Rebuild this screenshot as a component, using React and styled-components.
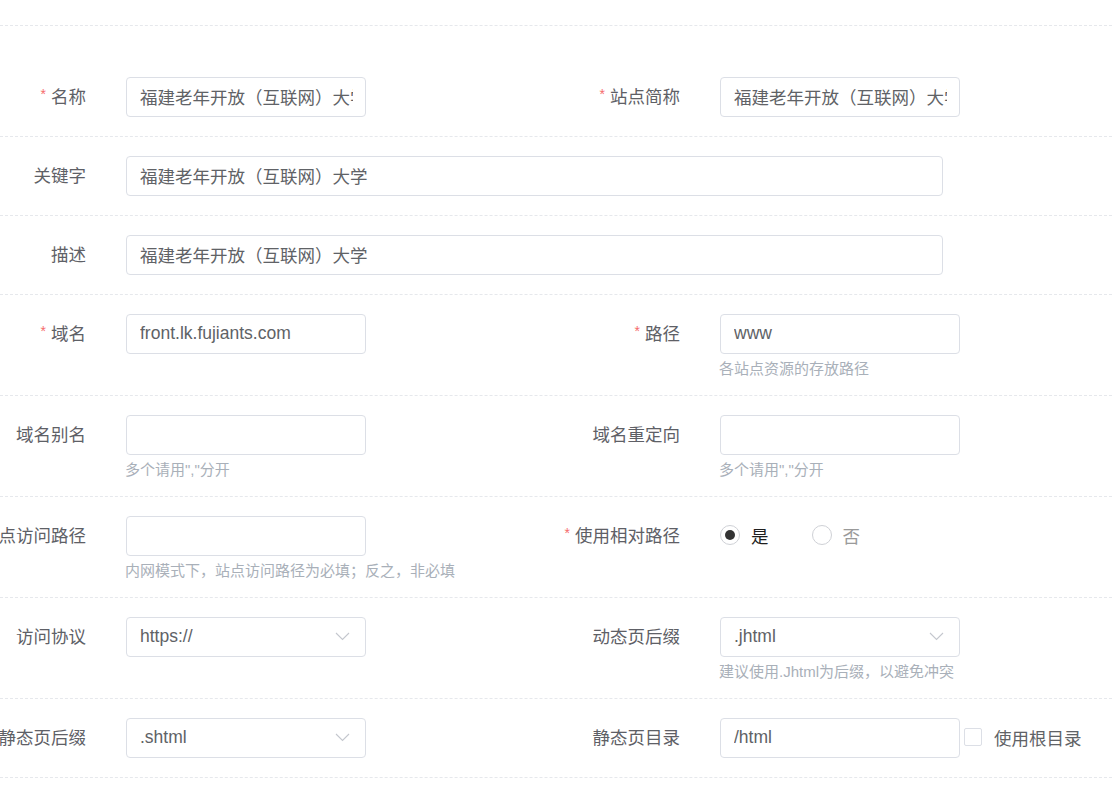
import React from 'react';
import styled, { createGlobalStyle } from 'styled-components';

const GlobalStyle = createGlobalStyle`
  html, body {
    margin: 0;
    padding: 0;
    background: #fff;
    overflow: hidden;
  }
  body {
    font-family: "Liberation Sans", "Noto Sans CJK SC", sans-serif;
    color: #606266;
  }
`;

const font = `"Liberation Sans", "Noto Sans CJK SC", sans-serif`;

const ChevronDown = () => (
  <svg width="15" height="9" viewBox="0 0 15 9" fill="none">
    <path d="M1 1l6.5 6.5L14 1" stroke="#c4c7ce" strokeWidth="1.1" />
  </svg>
);

const SiteForm = function () {
  return (
    <Page>
      <GlobalStyle />
      <TopBar />
      <Form>
        <Row>
          <Field>
            <Label required>名称</Label>
            <Control>
              <Input readOnly defaultValue="福建老年开放（互联网）大学" />
            </Control>
          </Field>
          <Field>
            <Label required>站点简称</Label>
            <Control>
              <Input readOnly defaultValue="福建老年开放（互联网）大学" />
            </Control>
          </Field>
        </Row>

        <Row>
          <Field>
            <Label>关键字</Label>
            <Control wide>
              <Input readOnly defaultValue="福建老年开放（互联网）大学" />
            </Control>
          </Field>
        </Row>

        <Row>
          <Field>
            <Label>描述</Label>
            <Control wide>
              <Input readOnly defaultValue="福建老年开放（互联网）大学" />
            </Control>
          </Field>
        </Row>

        <Row>
          <Field>
            <Label required>域名</Label>
            <Control>
              <Input readOnly defaultValue="front.lk.fujiants.com" />
            </Control>
          </Field>
          <Field>
            <Label required>路径</Label>
            <Control>
              <Input readOnly defaultValue="www" />
              <Hint>各站点资源的存放路径</Hint>
            </Control>
          </Field>
        </Row>

        <Row>
          <Field>
            <Label>域名别名</Label>
            <Control>
              <Input readOnly defaultValue="" />
              <Hint>多个请用","分开</Hint>
            </Control>
          </Field>
          <Field>
            <Label>域名重定向</Label>
            <Control>
              <Input readOnly defaultValue="" />
              <Hint>多个请用","分开</Hint>
            </Control>
          </Field>
        </Row>

        <Row>
          <Field>
            <Label>站点访问路径</Label>
            <Control>
              <Input readOnly defaultValue="" />
              <Hint>内网模式下，站点访问路径为必填；反之，非必填</Hint>
            </Control>
          </Field>
          <Field>
            <Label required>使用相对路径</Label>
            <RadioGroup>
              <RadioItem checked>
                <RadioCircle checked />
                是
              </RadioItem>
              <RadioItem>
                <RadioCircle />
                否
              </RadioItem>
            </RadioGroup>
          </Field>
        </Row>

        <Row>
          <Field>
            <Label>访问协议</Label>
            <Control>
              <Select>
                <span>https://</span>
                <ChevronDown />
              </Select>
            </Control>
          </Field>
          <Field>
            <Label>动态页后缀</Label>
            <Control>
              <Select>
                <span>.jhtml</span>
                <ChevronDown />
              </Select>
              <Hint>建议使用.Jhtml为后缀，以避免冲突</Hint>
            </Control>
          </Field>
        </Row>

        <Row>
          <Field>
            <Label>静态页后缀</Label>
            <Control>
              <Select>
                <span>.shtml</span>
                <ChevronDown />
              </Select>
            </Control>
          </Field>
          <Field>
            <Label>静态页目录</Label>
            <Control>
              <Input readOnly defaultValue="/html" />
            </Control>
            <CheckLabel>
              <CheckBox />
              使用根目录
            </CheckLabel>
          </Field>
        </Row>
      </Form>
    </Page>
  );
};

export default SiteForm;

const Page = styled.div`
  width: 1112px;
  height: 793px;
  overflow: hidden;
  background: #fff;
`;

const TopBar = styled.div`
  height: 25px;
  border-bottom: 1px dashed #e6e8ec;
`;

const Form = styled.div`
  padding-top: 32px;
`;

const Row = styled.div`
  display: grid;
  grid-template-columns: 594px 1fr;
  padding: 19px 0;
  border-bottom: 1px dashed #e6e8ec;
`;

const Field = styled.div`
  display: flex;
  align-items: flex-start;
  min-width: 0;
`;

const Label = styled.div`
  flex: 0 0 86px;
  width: 86px;
  height: 40px;
  padding-bottom: 3px;
  box-sizing: border-box;
  margin-right: 40px;
  display: flex;
  align-items: center;
  justify-content: flex-end;
  white-space: nowrap;
  font-size: 17.5px;
  color: #5e6066;

  &::before {
    content: ${(p) => (p.required ? '"*"' : 'none')};
    color: #f56c6c;
    font-size: 14px;
    margin-right: 5px;
    margin-top: -3px;
  }
`;

const Control = styled.div`
  width: ${(p) => (p.wide ? '817px' : '240px')};
  flex-shrink: 0;
`;

const Input = styled.input`
  box-sizing: border-box;
  display: block;
  width: 100%;
  height: 40px;
  padding: 0 12px 2px 13px;
  border: 1px solid #dcdfe6;
  border-radius: 4px;
  background: #fff;
  font-family: ${font};
  font-size: 17.5px;
  color: #606266;
  outline: none;
`;

const Select = styled.div`
  box-sizing: border-box;
  height: 40px;
  padding: 0 15px 1px 13px;
  border: 1px solid #dcdfe6;
  border-radius: 4px;
  display: flex;
  align-items: center;
  justify-content: space-between;
  font-size: 17.5px;
  color: #606266;
`;

const Hint = styled.div`
  margin-top: 8px;
  line-height: 14px;
  font-size: 15px;
  color: #a9b0b9;
  white-space: nowrap;
  margin-left: -1px;
`;

const RadioGroup = styled.div`
  height: 40px;
  padding-bottom: 2px;
  box-sizing: border-box;
  display: flex;
  align-items: center;
  gap: 43px;
`;

const RadioItem = styled.label`
  display: flex;
  align-items: center;
  gap: 11px;
  font-size: 17.5px;
  color: ${(p) => (p.checked ? '#1f1f1f' : '#9a9a9a')};
`;

const RadioCircle = styled.span`
  box-sizing: border-box;
  width: 20px;
  height: 20px;
  border-radius: 50%;
  border: 1px solid #cfd1d6;
  display: flex;
  align-items: center;
  justify-content: center;

  &::after {
    content: '';
    display: ${(p) => (p.checked ? 'block' : 'none')};
    width: 10px;
    height: 10px;
    border-radius: 50%;
    background: #333;
  }
`;

const CheckLabel = styled.label`
  height: 40px;
  padding-bottom: 2px;
  box-sizing: border-box;
  margin-left: 4px;
  display: flex;
  align-items: center;
  gap: 12px;
  font-size: 17.5px;
  color: #606266;
  white-space: nowrap;
`;

const CheckBox = styled.span`
  box-sizing: border-box;
  width: 18px;
  height: 18px;
  border: 1px solid #dcdfe6;
  border-radius: 2px;
  background: #fff;
`;
